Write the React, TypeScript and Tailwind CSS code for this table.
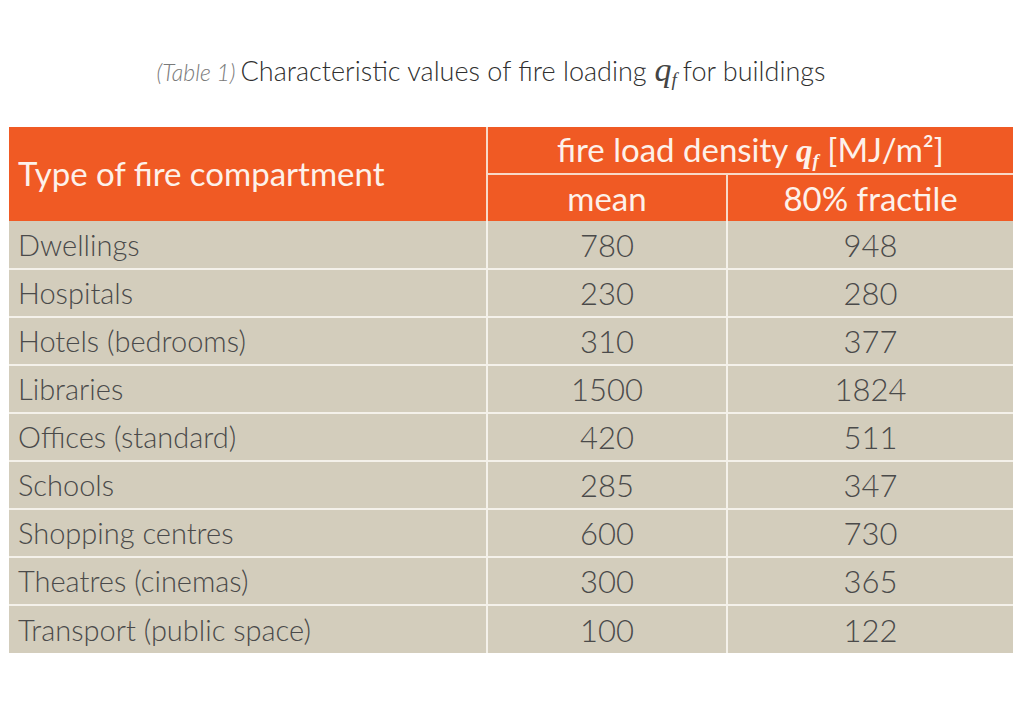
const ROWS = [
  { type: "Dwellings", mean: "780", fractile: "948" },
  { type: "Hospitals", mean: "230", fractile: "280" },
  { type: "Hotels (bedrooms)", mean: "310", fractile: "377" },
  { type: "Libraries", mean: "1500", fractile: "1824" },
  { type: "Offices (standard)", mean: "420", fractile: "511" },
  { type: "Schools", mean: "285", fractile: "347" },
  { type: "Shopping centres", mean: "600", fractile: "730" },
  { type: "Theatres (cinemas)", mean: "300", fractile: "365" },
  { type: "Transport (public space)", mean: "100", fractile: "122" },
];

const sans = "font-['Lato','Open_Sans',sans-serif]";

export default function App() {
  return (
    <div className={`h-[712px] w-[1024px] bg-white pt-[50px] ${sans}`}>
      <h1 className="flex items-baseline justify-center pr-[42px] text-[27px] font-light leading-[40px] text-[#2f2f2f]">
        <span className="mr-[5px] text-[23px] font-light italic text-[#7a7a7a]">(Table 1)</span>
        Characteristic values of fire loading
        <span className="ml-[8px] mr-[6px] font-['Liberation_Serif',serif] text-[34px] italic text-[#444]">
          q<sub className="text-[19px]">f</sub>
        </span>
        for buildings
      </h1>

      <table className="mt-[35px] ml-[9px] w-[1004px] table-fixed border-collapse text-[29px] font-light">
        <colgroup>
          <col className="w-[478px]" />
          <col className="w-[240px]" />
          <col className="w-[286px]" />
        </colgroup>
        <thead className="bg-[#f05a24] text-[#fdf1ea]">
          <tr className="h-[47px]">
            <th
              rowSpan={2}
              className="border-r-2 border-[#f8d9c8] pl-[9px] text-left text-[33px] font-normal"
            >
              Type of fire compartment
            </th>
            <th
              colSpan={2}
              className="border-b-2 border-[#f8d9c8] text-center text-[33px] font-normal leading-[40px]"
            >
              fire load density{" "}
              <span className="font-['Liberation_Serif',serif] font-bold italic">
                q<sub className="text-[19px]">f</sub>
              </span>{" "}
              [MJ/m²]
            </th>
          </tr>
          <tr className="h-[47px]">
            <th className="border-r-2 border-[#f8d9c8] text-center text-[33px] font-normal leading-[40px]">mean</th>
            <th className="text-center text-[33px] font-normal leading-[40px]">80% fractile</th>
          </tr>
        </thead>
        <tbody className="bg-[#d3cdbc] text-[#4a4a4a]">
          {ROWS.map((row, i) => (
            <tr
              key={row.type}
              className={i === 0 ? "h-[48px]" : "h-[48px] border-t-2 border-[#f4f1ea]"}
            >
              <td className="border-r-2 border-[#f4f1ea] pl-[9px] leading-[40px]">{row.type}</td>
              <td className="border-r-2 border-[#f4f1ea] text-center text-[31px] leading-[40px]">{row.mean}</td>
              <td className="text-center text-[31px] leading-[40px]">{row.fractile}</td>
            </tr>
          ))}
        </tbody>
      </table>
    </div>
  );
}
